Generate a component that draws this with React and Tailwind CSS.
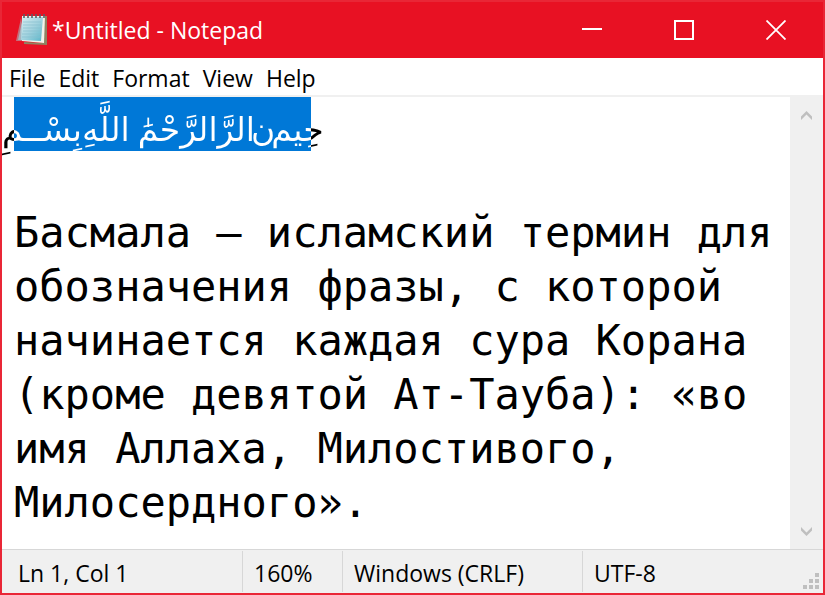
import { useState } from 'react';

const menus = ['File', 'Edit', 'Format', 'View', 'Help'];

const initialText =
  'Басмала — исламский термин для обозначения фразы, с которой начинается каждая сура Корана (кроме девятой Ат-Тауба): «во имя Аллаха, Милостивого, Милосердного».';

function NotepadIcon() {
  return (
    <svg width="34" height="34" viewBox="0 0 34 34" aria-hidden="true">
      <defs>
        <linearGradient id="page" x1="0" y1="0" x2="1" y2="1">
          <stop offset="0" stopColor="#d9eef2" />
          <stop offset="0.5" stopColor="#a3d3df" />
          <stop offset="1" stopColor="#58b5c9" />
        </linearGradient>
      </defs>
      <path d="M7 5 L2 28 H9 Z" fill="#c46f7c" />
      <path d="M8 9 L4 27 H9 Z" fill="#a9b3bd" />
      <path d="M30 3 H33 V32 L10 31 V29 L29 30 Z" fill="#8d8462" />
      <path d="M8 3 H31 L30 30 L8 28 Z" fill="#f4f3ea" />
      <path d="M8 4 H29 L27 28 L7 27 Z" fill="url(#page)" />
      <path d="M9 9H27M9 12H27M9 15H27M9 18H27M8 21H26M8 24H26" stroke="#86bfce" strokeWidth="0.7" />
      <path d="M10 1v4M14 1v4M18 1v4M22 1v4M26 1v4M30 1v4" stroke="#5c5c66" strokeWidth="1.6" />
    </svg>
  );
}

function TitleBar() {
  return (
    <header className="flex h-14 items-center bg-[#e81123] pr-px pl-3 text-white">
      <NotepadIcon />
      <h1 className="ml-1 flex-1 text-[23px] leading-8">*Untitled - Notepad</h1>
      <button aria-label="Minimize" className="flex h-full w-[92px] items-center justify-center">
        <svg width="20" height="20" viewBox="0 0 20 20">
          <path d="M0 9H20" stroke="currentColor" strokeWidth="2" />
        </svg>
      </button>
      <button aria-label="Maximize" className="flex h-full w-[92px] items-center justify-center">
        <svg width="20" height="20" viewBox="0 0 20 20">
          <path d="M1 1H19V19H1Z" fill="none" stroke="currentColor" strokeWidth="2" />
        </svg>
      </button>
      <button aria-label="Close" className="flex h-full w-[92px] items-center justify-center">
        <svg width="20" height="20" viewBox="0 0 20 20">
          <path d="M0.5 0.5L19.5 19.5M19.5 0.5L0.5 19.5" stroke="currentColor" strokeWidth="1.8" />
        </svg>
      </button>
    </header>
  );
}

function MenuBar() {
  return (
    <nav className="flex gap-[13px] border-b-2 border-[#f0f0f0] bg-white pt-1 pb-px pl-[7px]">
      {menus.map((menu) => (
        <button key={menu} className="text-[23px] leading-8">
          {menu}
        </button>
      ))}
    </nav>
  );
}

// Words run left to right, letters inside each word right to left.
// Letters that stick out of the selection are black.
function SelectedLine() {
  return (
    <div className="flex h-[54px] pl-3">
      <div className="flex w-[297px] bg-[#0078d7]">
        <p
          lang="ar"
          className="-ml-3 flex h-[66px] shrink-0 bg-[linear-gradient(90deg,#000_12px,#fff_12px,#fff_309px,#000_309px)] bg-clip-text font-['DejaVu_Sans'] text-[33px] leading-[66px] whitespace-nowrap text-transparent"
        >
          <bdi dir="rtl">بِسْــمِ</bdi>
          <bdi dir="rtl">اللَّهِ</bdi>
          <bdi dir="rtl" className="ml-2">الرَّحْمَٰ</bdi>
          <bdi dir="rtl">الرَّ</bdi>
          <bdi dir="rtl" className="-ml-1">ن</bdi>
          <bdi dir="rtl" className="-ml-1">حِيمِ</bdi>
        </p>
      </div>
    </div>
  );
}

function ScrollBar() {
  return (
    <div className="flex w-[33px] shrink-0 flex-col justify-between bg-[#f0f0f0]">
      <button aria-label="Scroll up" className="flex h-9 items-center justify-center">
        <svg width="11" height="9" viewBox="0 0 11 9">
          <path d="M0 5.5L5.5 0L11 5.5V9L5.5 3.5L0 9Z" fill="#bfbfbf" />
        </svg>
      </button>
      <button aria-label="Scroll down" className="flex h-9 items-center justify-center">
        <svg width="11" height="9" viewBox="0 0 11 9">
          <path d="M0 3.5L5.5 9L11 3.5V0L5.5 5.5L0 0Z" fill="#bfbfbf" />
        </svg>
      </button>
    </div>
  );
}

function StatusBar() {
  return (
    <footer className="flex h-11 border-t border-[#d7d7d7] bg-[#f0f0f0] pt-px pb-px text-[23px] leading-[44px]">
      <span className="w-[241px] border-r border-[#d7d7d7] pl-4">Ln 1, Col 1</span>
      <span className="w-[100px] border-r border-[#d7d7d7] pl-[11px]">160%</span>
      <span className="w-60 border-r border-[#d7d7d7] pl-[11px]">Windows (CRLF)</span>
      <span className="flex-1 pl-[11px]">UTF-8</span>
      <svg className="mr-1 mb-[3px] self-end" width="16" height="16" viewBox="0 0 16 16" aria-hidden="true">
        <path d="M12 0h4v4h-4zM6 6h4v4H6zM12 6h4v4h-4zM0 12h4v4H0zM6 12h4v4H6zM12 12h4v4h-4z" fill="#bfbfbf" />
      </svg>
    </footer>
  );
}

export default function App() {
  const [text, setText] = useState(initialText);

  return (
    <div className="flex h-screen flex-col overflow-hidden border-2 border-[#e92636] bg-white font-['Open_Sans','Noto_Sans',sans-serif] text-black">
      <TitleBar />
      <MenuBar />
      <main className="flex min-h-0 flex-1">
        <div className="flex min-w-0 flex-1 flex-col">
          <SelectedLine />
          <textarea
            aria-label="Text editor"
            spellCheck={false}
            value={text}
            onChange={(e) => setText(e.target.value)}
            className="mt-[55px] w-full flex-1 resize-none overflow-hidden pl-3 font-['DejaVu_Sans_Mono',monospace] text-[42px] leading-[54px] outline-none"
          />
        </div>
        <ScrollBar />
      </main>
      <StatusBar />
    </div>
  );
}
